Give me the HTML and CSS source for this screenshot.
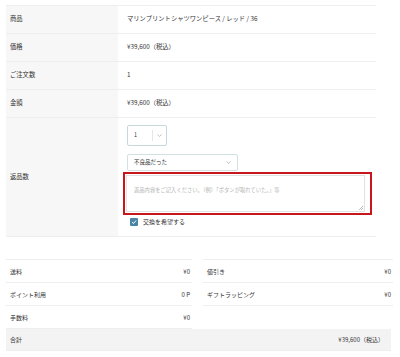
FILE: index.html
```html
<!DOCTYPE html>
<html lang="ja">
<head>
  <meta charset="UTF-8">
  <meta name="viewport" content="width=device-width, initial-scale=1.0">
  <title>返品申請</title>
  <link rel="stylesheet" href="styles.css">
</head>
<body>
  <div class="page">
    <table class="detail">
      <tr>
        <th>商品</th>
        <td>マリンプリントシャツワンピース / レッド / 36</td>
      </tr>
      <tr>
        <th>価格</th>
        <td>¥39,600（税込）</td>
      </tr>
      <tr>
        <th>ご注文数</th>
        <td>1</td>
      </tr>
      <tr>
        <th>金額</th>
        <td>¥39,600（税込）</td>
      </tr>
      <tr class="returnRow">
        <th>返品数</th>
        <td>
          <div class="returnForm">
            <div class="qty">
              <span class="qtyVal">1</span>
              <span class="qtyArrow">
                <svg width="5" height="3" viewBox="0 0 5 3"><path d="M.5 .5 2.5 2.5 4.5 .5" fill="none" stroke="#aaa" stroke-width=".7"/></svg>
              </span>
            </div>
            <div class="reason">
              <span>不良品だった</span>
              <svg width="5" height="3" viewBox="0 0 5 3"><path d="M.5 .5 2.5 2.5 4.5 .5" fill="none" stroke="#aaa" stroke-width=".7"/></svg>
            </div>
            <div class="noteWrap">
              <textarea class="note" placeholder="返品内容をご記入ください。（例）「ボタンが取れていた。」等"></textarea>
              <svg class="grip" width="4" height="4" viewBox="0 0 4 4"><path d="M4 0 0 4M4 2 2 4" stroke="#999" stroke-width=".6"/></svg>
            </div>
            <label class="exchange">
              <span class="check">
                <svg width="6" height="6" viewBox="0 0 6 6"><path d="M1 3.1 2.5 4.5 5 1.5" fill="none" stroke="#fff" stroke-width="1"/></svg>
              </span>
              交換を希望する
            </label>
          </div>
        </td>
      </tr>
    </table>

    <div class="summary">
      <ul class="sumList">
        <li><span>送料</span><span>¥0</span></li>
        <li><span>ポイント利用</span><span>0 P</span></li>
        <li><span>手数料</span><span>¥0</span></li>
      </ul>
      <ul class="sumList">
        <li><span>値引き</span><span>¥0</span></li>
        <li><span>ギフトラッピング</span><span>¥0</span></li>
      </ul>
    </div>
    <div class="total">
      <span>合計</span>
      <span>¥39,600（税込）</span>
    </div>
  </div>
</body>
</html>
```

FILE: styles.css
```css
body {
  margin: 0;
  background-color: #fff;
  color: #333;
  font-family: "Noto Sans CJK JP", "Noto Sans", sans-serif;
  font-size: 6px;
}

.page {
  padding: 5px 6px 0;
}

/* 上の明細 */
.detail {
  width: 370px;
  border-collapse: collapse;
  border-top: 1px solid #eee;
}

.detail th,
.detail td {
  height: 27px;
  padding: 0;
  border-bottom: 1px solid #eee;
  font-size: 6.3px;
  line-height: 1;
}

.detail th {
  width: 108px;
  padding-left: 4px;
  text-align: left;
  font-weight: normal;
  background-color: #f7f7f7;
}

.detail td {
  padding-left: 9px;
}

.returnRow td {
  height: auto;
  padding: 7px 0 10px 9px;
}

.returnForm {
  display: flex;
  flex-direction: column;
  align-items: flex-start;
}

.qty {
  display: flex;
  align-items: center;
  width: 38px;
  height: 19px;
  border: 1px solid #c8d9de;
  border-radius: 2px;
}

.qtyVal {
  width: 24px;
  padding-left: 6px;
  box-sizing: border-box;
  font-size: 5.5px;
}

.qtyArrow {
  display: flex;
  align-items: center;
  justify-content: center;
  flex: 1;
  height: 11px;
  border-left: 1px solid #e2e8ea;
}

.reason {
  display: flex;
  align-items: center;
  justify-content: space-between;
  width: 111px;
  height: 17px;
  margin-top: 8px;
  padding: 0 6px;
  box-sizing: border-box;
  border: 1px solid #d3e0e3;
  border-radius: 2px;
  font-size: 5.5px;
}

/* 赤枠 */
.noteWrap {
  position: relative;
  width: 249px;
  height: 43px;
  margin: 1px 0 0 -4px;
  padding: 1px 5px 1px 1px;
  box-sizing: border-box;
  border: 2px solid #c8161d;
}

.note {
  display: block;
  width: 100%;
  height: 100%;
  margin: 0;
  padding: 10px 7px;
  box-sizing: border-box;
  border: 1px solid #e2e2e2;
  font-family: inherit;
  font-size: 5.3px;
  resize: none;
}

.note::placeholder {
  color: #b5b5b5;
}

.grip {
  position: absolute;
  right: 7px;
  bottom: 3px;
}

.exchange {
  display: flex;
  align-items: center;
  gap: 5px;
  margin: 3px 0 0 3px;
  font-size: 6px;
}

.check {
  display: flex;
  align-items: center;
  justify-content: center;
  width: 8px;
  height: 8px;
  border-radius: 1px;
  background-color: #4a85a8;
}

/* 下の合計 */
.summary {
  display: grid;
  grid-template-columns: 186px 190px;
  column-gap: 11px;
  margin-top: 22px;
}

.sumList {
  margin: 0;
  padding: 0;
  list-style: none;
  border-top: 1px solid #eee;
}

.sumList li {
  display: flex;
  align-items: center;
  justify-content: space-between;
  height: 22px;
  padding: 0 2px 0 4px;
  border-bottom: 1px solid #eee;
}

.total {
  display: flex;
  align-items: center;
  justify-content: space-between;
  width: 385px;
  height: 22px;
  padding: 0 7px 0 4px;
  box-sizing: border-box;
  background-color: #f3f3f3;
  border-bottom: 1px solid #eee;
}
```
